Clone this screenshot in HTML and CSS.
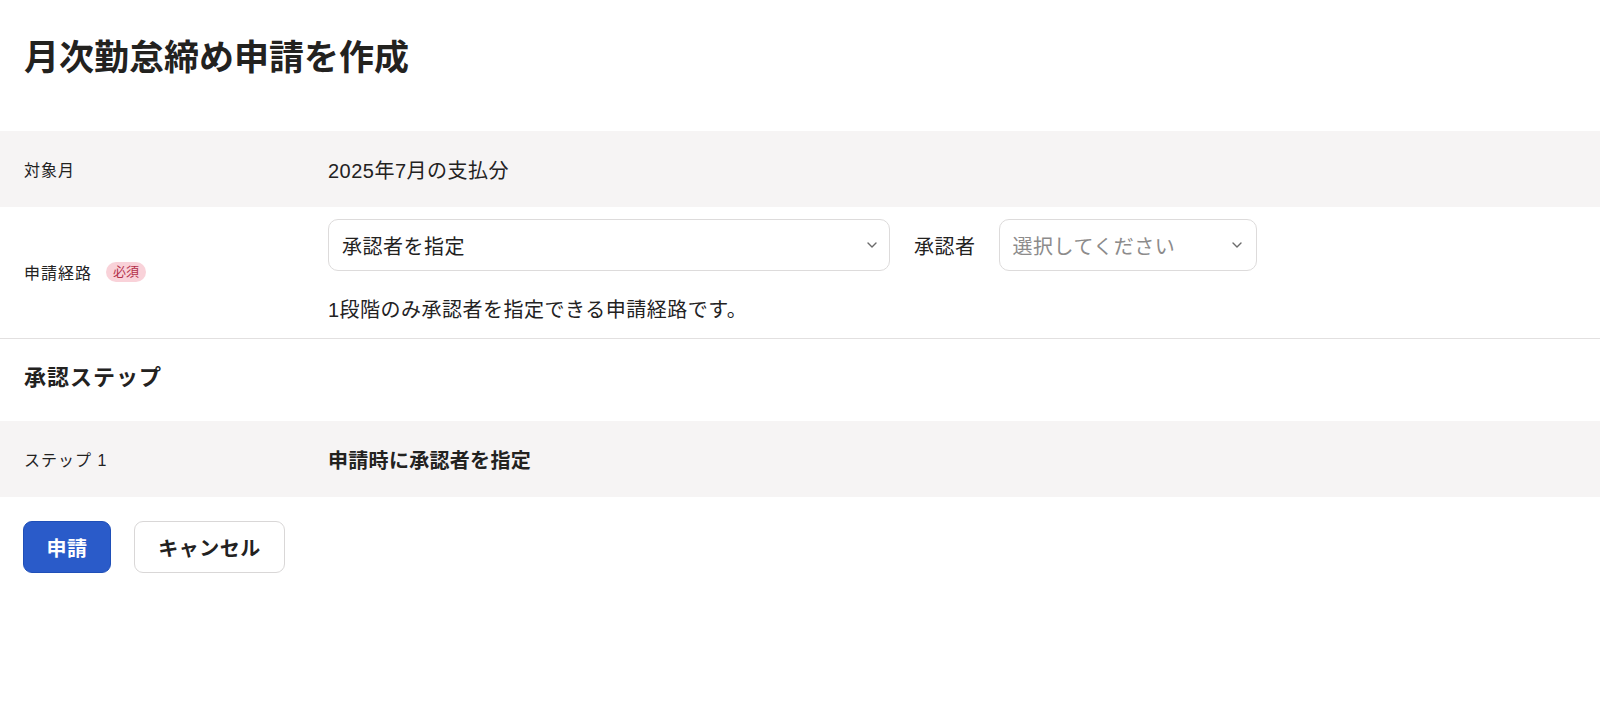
FILE: index.html
```html
<!DOCTYPE html>
<html lang="ja">
<head>
    <meta charset="UTF-8">
    <meta name="viewport" content="width=device-width, initial-scale=1.0">
    <title>月次勤怠締め申請を作成</title>
    <link rel="stylesheet" href="styles.css">
</head>
<body>
    <div class="page">
        <h1 class="page-title">月次勤怠締め申請を作成</h1>

        <div class="form-table">
            <div class="form-row shaded">
                <div class="form-label">対象月</div>
                <div class="form-value">2025年7月の支払分</div>
            </div>
            <div class="form-row route-row">
                <div class="form-label">申請経路 <span class="required">必須</span></div>
                <div class="form-value">
                    <div class="select-line">
                        <div class="select select-route">
                            <span>承認者を指定</span>
                            <svg class="chevron" width="10" height="6" viewBox="0 0 10 6"><path d="M1 1l4 4 4-4" fill="none" stroke="#6b6b6b" stroke-width="1.4" stroke-linecap="round" stroke-linejoin="round"/></svg>
                        </div>
                        <span class="approver-label">承認者</span>
                        <div class="select select-approver">
                            <span class="placeholder">選択してください</span>
                            <svg class="chevron" width="10" height="6" viewBox="0 0 10 6"><path d="M1 1l4 4 4-4" fill="none" stroke="#6b6b6b" stroke-width="1.4" stroke-linecap="round" stroke-linejoin="round"/></svg>
                        </div>
                    </div>
                    <p class="help-text">1段階のみ承認者を指定できる申請経路です。</p>
                </div>
            </div>
        </div>

        <h2 class="section-title">承認ステップ</h2>

        <div class="form-table">
            <div class="form-row shaded">
                <div class="form-label">ステップ 1</div>
                <div class="form-value strong">申請時に承認者を指定</div>
            </div>
        </div>

        <div class="actions">
            <button class="btn btn-primary">申請</button>
            <button class="btn btn-secondary">キャンセル</button>
        </div>
    </div>
</body>
</html>
```

FILE: styles.css
```css
body {
    font-family: "Liberation Sans", "Noto Sans CJK JP", sans-serif;
    margin: 0;
    padding: 0;
    background-color: #fff;
    color: #23221f;
}
.page {
    padding: 0 0 40px;
}
.page-title {
    font-size: 35px;
    font-weight: bold;
    margin: 0;
    padding: 35px 24px 0;
    height: 131px;
    box-sizing: border-box;
    line-height: 46px;
}
.form-row {
    display: grid;
    grid-template-columns: 304px 1fr;
    padding: 0 24px;
    align-items: center;
}
.form-row.shaded {
    background-color: #f6f4f4;
    height: 76px;
}
.form-label {
    font-size: 16px;
    letter-spacing: 1px;
    display: flex;
    align-items: center;
    gap: 14px;
}
.form-value {
    font-size: 20px;
    letter-spacing: 0.5px;
}
.form-value.strong {
    font-weight: bold;
    letter-spacing: 0.3px;
}
.route-row {
    padding-top: 12px;
    padding-bottom: 14px;
    border-bottom: 1px solid #e2e0e0;
}
.required {
    font-size: 13px;
    letter-spacing: 0;
    color: #b3304a;
    background-color: #f9d2d9;
    border-radius: 10px;
    padding: 0 7px;
    line-height: 20px;
}
.select-line {
    display: flex;
    align-items: center;
}
.select {
    height: 52px;
    box-sizing: border-box;
    border: 1px solid #dddbdb;
    border-radius: 10px;
    display: flex;
    align-items: center;
    justify-content: space-between;
    padding: 0 12px 0 13px;
    font-size: 20px;
    background-color: #fff;
}
.select-route {
    width: 562px;
}
.select-approver {
    width: 258px;
    padding-right: 14px;
}
.placeholder {
    color: #8c8b8b;
}
.approver-label {
    font-size: 20px;
    margin: 0 23px 0 24px;
}
.help-text {
    margin: 25px 0 0;
    line-height: 28px;
}
.section-title {
    font-size: 22px;
    letter-spacing: 1px;
    font-weight: bold;
    margin: 0;
    padding: 0 24px;
    height: 82px;
    line-height: 78px;
}
.actions {
    display: flex;
    gap: 23px;
    padding: 24px 23px 0;
}
.btn {
    height: 52px;
    border-radius: 9px;
    font-family: inherit;
    font-size: 20px;
    font-weight: bold;
    letter-spacing: 0.5px;
    cursor: pointer;
}
.btn-primary {
    width: 88px;
    background-color: #2a5bc9;
    border: 1px solid #1f4fb8;
    color: #fff;
}
.btn-secondary {
    width: 151px;
    background-color: #fff;
    border: 1px solid #d9d7d7;
    color: #23221f;
}
```
